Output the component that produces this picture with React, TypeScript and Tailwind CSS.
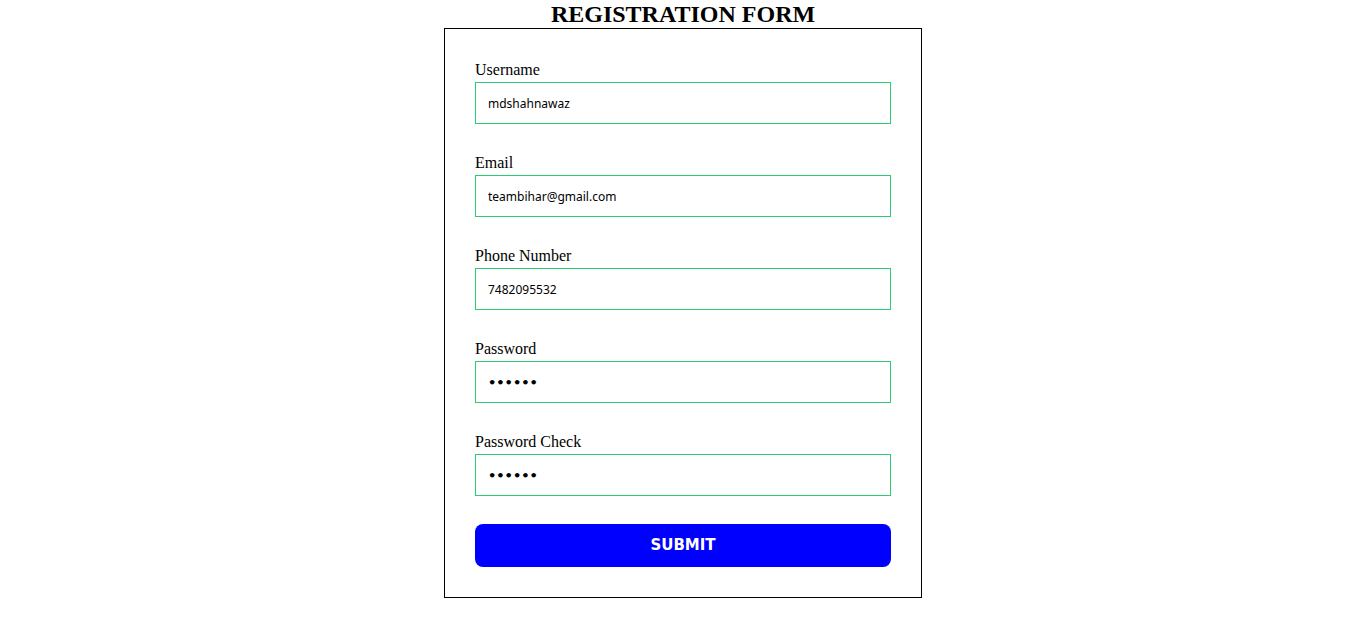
export default function App() {
  const fields = [
    { label: 'Username', value: 'mdshahnawaz', type: 'text' },
    { label: 'Email', value: 'teambihar@gmail.com', type: 'text' },
    { label: 'Phone Number', value: '7482095532', type: 'text' },
    { label: 'Password', value: '123456', type: 'password' },
    { label: 'Password Check', value: '123456', type: 'password' },
  ];

  return (
    <div className="flex flex-col items-center bg-white min-h-[643px] font-['Liberation_Serif',serif] text-black">
      <h2 className="text-2xl font-bold leading-[28px]">REGISTRATION FORM</h2>
      <form className="w-[478px] border border-black px-[30px] pt-[32px] pb-[30px] flex flex-col">
        {fields.map((f, i) => (
          <div
            key={f.label}
            className={`flex flex-col ${i === fields.length - 1 ? 'mb-[28px]' : 'mb-[30px]'}`}
          >
            <label className="text-base leading-[18px] mb-[3px]">{f.label}</label>
            <input
              type={f.type}
              defaultValue={f.value}
              readOnly
              className={`h-[42px] w-full border border-[#2ecc71] px-3 outline-none ${
                f.type === 'password'
                  ? "text-[13px] font-bold font-['DejaVu_Sans',sans-serif]"
                  : "text-[12px] font-['Noto_Sans',sans-serif]"
              }`}
            />
          </div>
        ))}
        <button
          type="button"
          className="h-[43px] w-full rounded-lg bg-[#0000ff] text-white text-[15px] font-bold font-['DejaVu_Sans',sans-serif]"
        >
          SUBMIT
        </button>
      </form>
    </div>
  );
}
